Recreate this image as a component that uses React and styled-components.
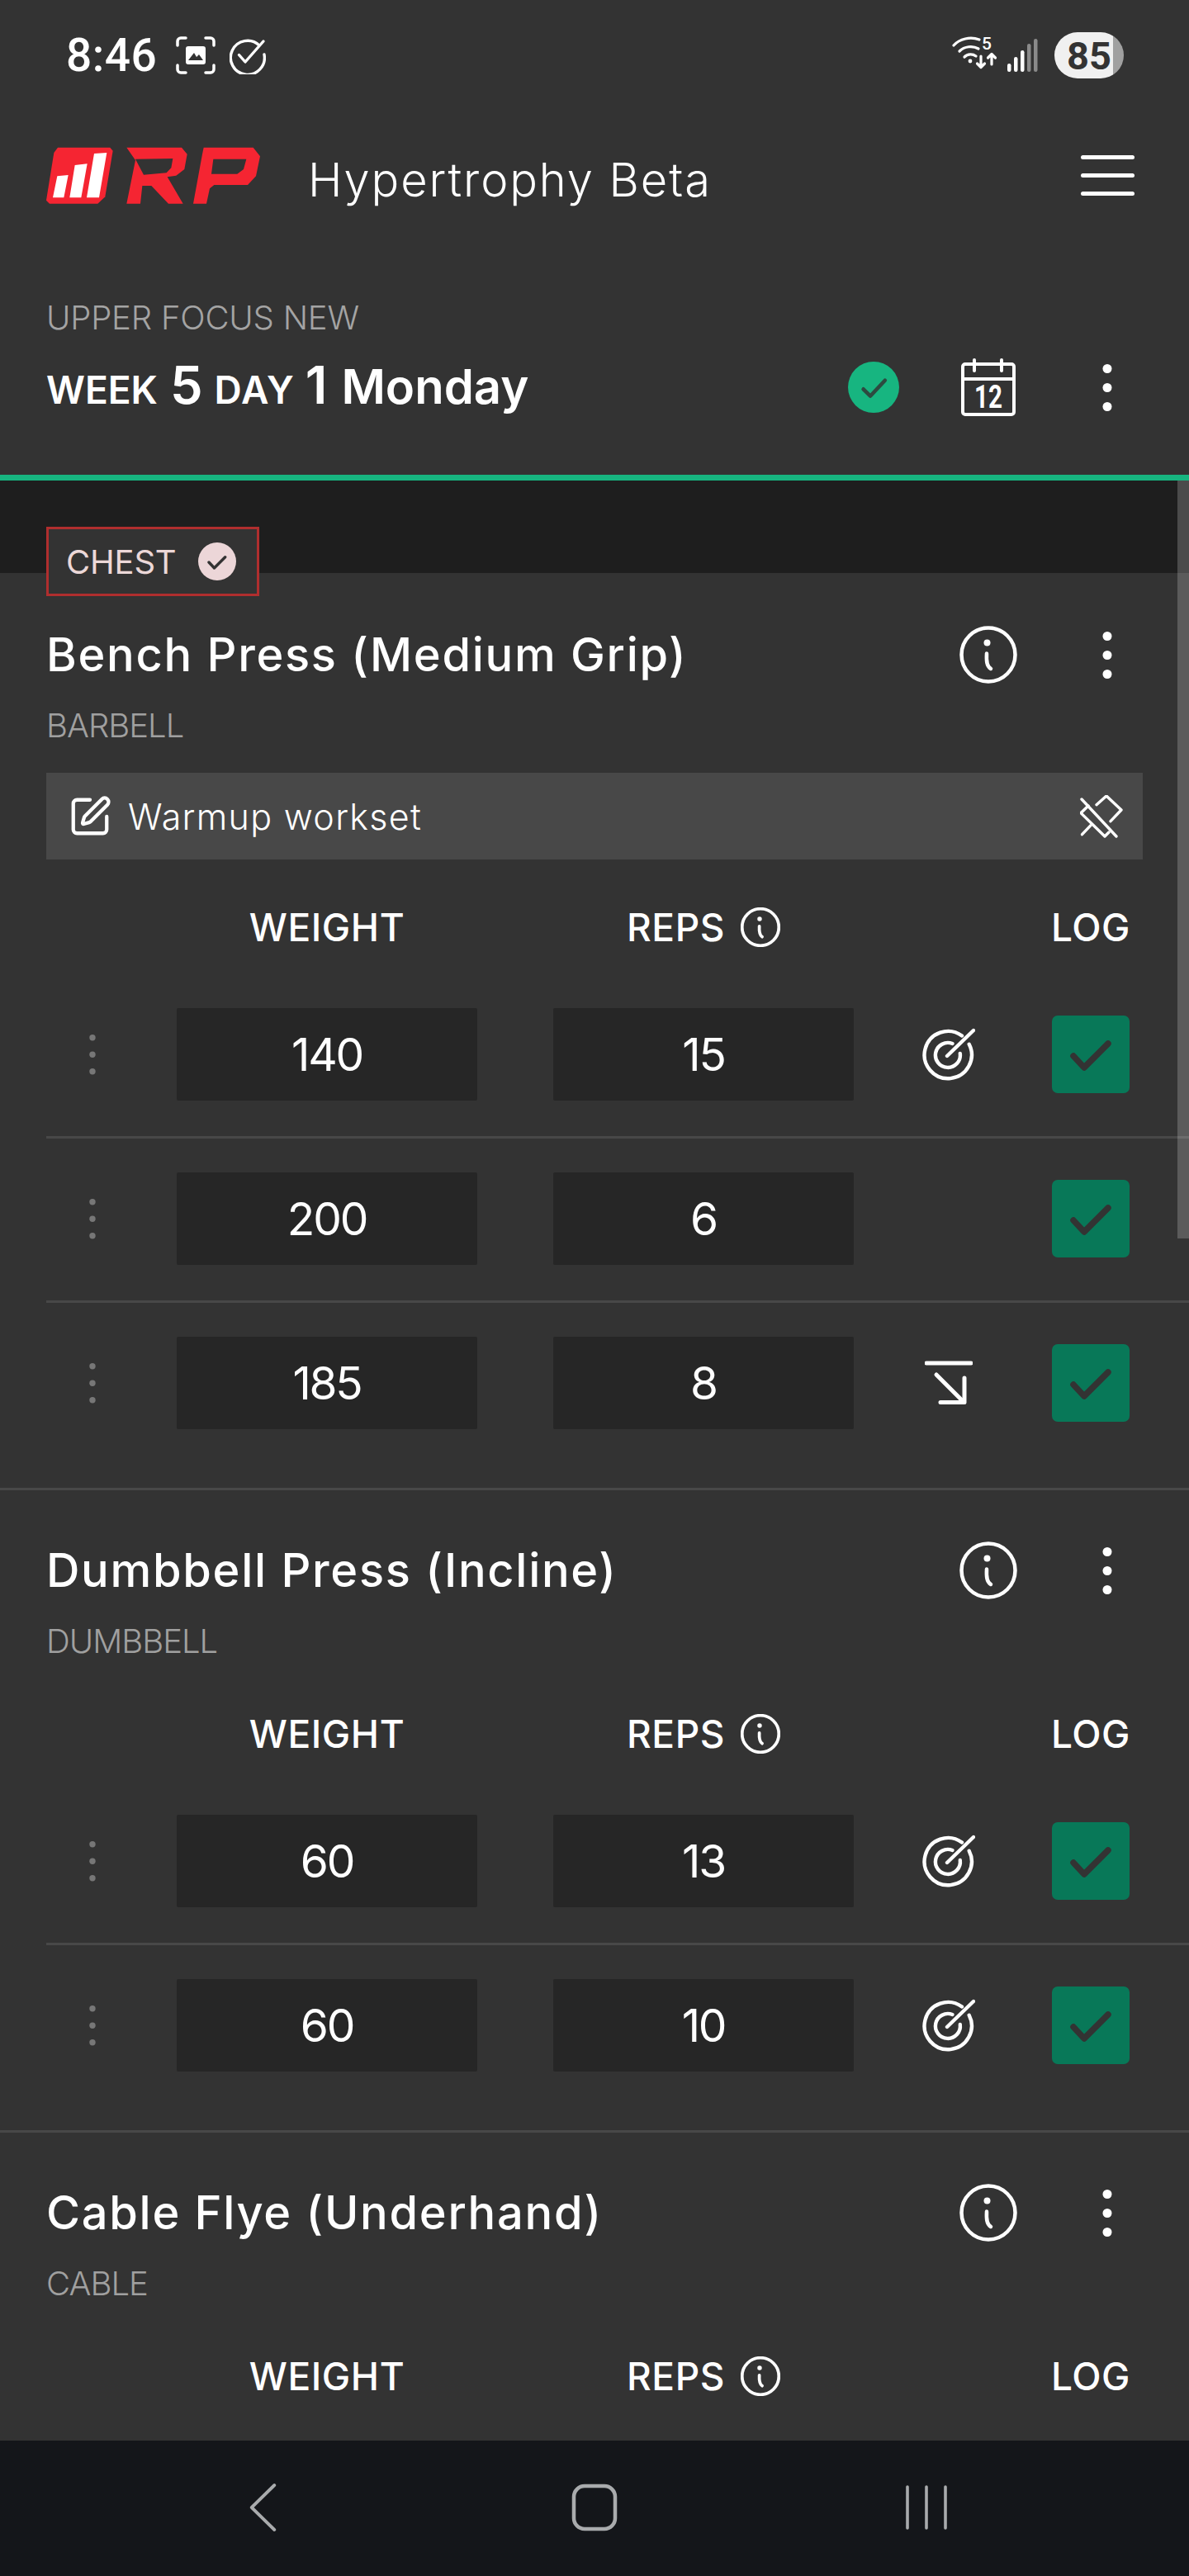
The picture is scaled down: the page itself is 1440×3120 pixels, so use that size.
import React from "react";
import styled, { createGlobalStyle } from "styled-components";
import { SquarePen } from "lucide-react";

const GlobalStyle = createGlobalStyle`
  html, body {
    margin: 0;
    padding: 0;
    background: #333333;
  }
  * {
    box-sizing: border-box;
  }
`;

const Page = styled.div`
  width: 1440px;
  height: 3120px;
  display: flex;
  flex-direction: column;
  background: #333333;
  color: #fff;
  font-family: "Inter", "Liberation Sans", sans-serif;
  overflow: hidden;
`;

const StatusBar = styled.div`
  height: 134px;
  flex-shrink: 0;
  display: flex;
  align-items: center;
  justify-content: space-between;
  padding: 0 79px 0 80px;
`;

const StatusGroup = styled.div`
  display: flex;
  align-items: center;
`;

const Clock = styled.span`
  font-family: "Roboto", sans-serif;
  font-weight: 500;
  font-size: 55px;
  letter-spacing: 0.5px;
  margin-right: 23px;
`;

const Battery = styled.div`
  width: 84px;
  height: 56px;
  margin-left: 20px;
  border-radius: 28px;
  display: flex;
  align-items: center;
  justify-content: center;
  background: linear-gradient(to right, #f0f0f0 84.5%, #a0a0a0 84.5%);
  color: #333;
  font-family: "Roboto", sans-serif;
  font-weight: 700;
  font-size: 47px;
`;

const AppHeader = styled.header`
  height: 156px;
  flex-shrink: 0;
  display: flex;
  align-items: center;
  padding: 0 66px 0 50px;
`;

const AppTitle = styled.h1`
  margin: 11px 0 0 53px;
  flex: 1;
  font-size: 56px;
  font-weight: 300;
  letter-spacing: 1.9px;
`;

const Burger = styled.div`
  width: 65px;
  display: flex;
  flex-direction: column;
  gap: 17px;
  span {
    display: block;
    height: 5px;
    border-radius: 3px;
    background: #fff;
  }
`;

const WorkoutHead = styled.section`
  height: 292px;
  flex-shrink: 0;
  padding: 75px 87px 0 56px;
  border-bottom: 7px solid #17b580;
`;

const Mesocycle = styled.div`
  height: 40px;
  line-height: 40px;
  font-size: 40px;
  font-weight: 300;
  color: #a4a4a4;
  letter-spacing: -0.2px;
`;

const WeekRow = styled.div`
  display: flex;
  align-items: center;
  height: 70px;
  margin-top: 29px;
`;

const WeekTitle = styled.div`
  flex: 1;
  font-weight: 600;
  font-size: 58px;
  line-height: 72px;
  letter-spacing: 0;
  white-space: nowrap;
`;

const SmallCaps = styled.span`
  font-size: 46px;
  letter-spacing: ${props => props.$spacing}px;
`;

const BigNum = styled.span`
  font-size: 63px;
  font-weight: 600;
  margin: 0 ${props => props.$right}px 0 ${props => props.$left}px;
`;

const Actions = styled.div`
  display: flex;
  align-items: center;
`;

const Main = styled.main`
  position: relative;
  flex: 1;
  overflow: hidden;
`;

const ScrollThumb = styled.div`
  position: absolute;
  top: 0;
  right: 0;
  width: 14px;
  height: 918px;
  background: rgba(255, 255, 255, 0.2);
`;

const GroupBand = styled.div`
  height: 112px;
  padding: 56px 0 0 56px;
  background: #1e1e1e;
`;

const GroupTag = styled.div`
  position: relative;
  width: 258px;
  height: 84px;
  display: flex;
  align-items: center;
  padding-left: 21px;
  background: #333;
  border: 3px solid #b02e2e;
  color: #ecd8d8;
  font-size: 40px;
  font-weight: 400;
  letter-spacing: -0.2px;
`;

const GroupCheck = styled.svg`
  position: absolute;
  right: 25px;
  top: 16px;
`;

const Exercise = styled.article`
  padding: 64px 0 28px 56px;
  & + & {
    border-top: 3px solid #484848;
    padding-top: 62px;
  }
`;

const ExerciseTop = styled.div`
  display: flex;
  align-items: center;
  height: 70px;
  padding-right: 87px;
`;

const ExerciseName = styled.h2`
  flex: 1;
  margin: 0;
  font-size: 56px;
  font-weight: 500;
  letter-spacing: 1.7px;
  white-space: nowrap;
`;

const Equipment = styled.div`
  height: 40px;
  line-height: 40px;
  margin-top: 31px;
  font-size: 40px;
  font-weight: 300;
  color: #a0a0a0;
  letter-spacing: -1px;
`;

const NoteBar = styled.div`
  width: 1328px;
  height: 105px;
  margin-top: 37px;
  display: flex;
  align-items: center;
  padding: 0 24px 0 26px;
  background: #484848;
  font-size: 43px;
  font-weight: 300;
  letter-spacing: 1.3px;
`;

const NoteText = styled.span`
  flex: 1;
  margin-left: 19px;
`;

const SetGrid = styled.div`
  display: grid;
  grid-template-columns: 158px 364px 456px 240px 94px;
  align-items: center;
`;

const ColumnHead = styled(SetGrid)`
  height: 60px;
  margin: 52px 0 27px;
  font-size: 46px;
  font-weight: 500;
  letter-spacing: 0.6px;
  ${Equipment} + & {
    margin-top: 62px;
  }
`;

const ColumnLabel = styled.div`
  grid-column: ${props => props.$col};
  display: flex;
  align-items: center;
  justify-content: center;
  gap: 19px;
  width: ${props => props.$wide ? "364px" : "auto"};
  justify-self: ${props => props.$wide ? "end" : "stretch"};
`;

const SetRow = styled(SetGrid)`
  padding: 41px 0 43px;
  border-bottom: 3px solid #484848;
  &:last-child {
    border-bottom: none;
  }
`;

const DragCell = styled.div`
  padding-left: 48px;
  display: flex;
`;

const ValueBox = styled.div`
  width: 364px;
  height: 112px;
  justify-self: end;
  display: flex;
  align-items: center;
  justify-content: center;
  background: #262626;
  border-radius: 2px;
  font-size: 55px;
  font-weight: 400;
  letter-spacing: -2.2px;
`;

const HintCell = styled.div`
  display: flex;
  justify-content: center;
  padding-right: 10px;
`;

const LogButton = styled.div`
  width: 94px;
  height: 94px;
  border-radius: 7px;
  background: #087858;
  display: flex;
`;

const NavBar = styled.nav`
  height: 164px;
  flex-shrink: 0;
  display: flex;
  justify-content: center;
  align-items: center;
  background: #14161a;
  padding-bottom: 3px;
`;

const NavCell = styled.div`
  width: 402px;
  display: flex;
  justify-content: center;
`;

const ScreenshotIcon = () => (
    <svg width="48" height="46" viewBox="0 0 48 46" fill="none" stroke="#fff" strokeWidth="3.5" strokeLinecap="round">
        <path d="M2 11V6a4 4 0 0 1 4-4h6M36 2h6a4 4 0 0 1 4 4v5M46 35v5a4 4 0 0 1-4 4h-6M12 44H6a4 4 0 0 1-4-4v-5" />
        <path fillRule="evenodd" fill="#fff" stroke="none" d="M15 12h18a3 3 0 0 1 3 3v16a3 3 0 0 1-3 3H15a3 3 0 0 1-3-3V15a3 3 0 0 1 3-3zm0 17h18l-5-7-3 3-3-5-7 9z" />
    </svg>
);

const TaskIcon = () => (
    <svg width="44" height="46" viewBox="0 0 44 46" fill="none" stroke="#fff" strokeWidth="3.4" strokeLinecap="round" strokeLinejoin="round" style={{ marginLeft: 17 }}>
        <path d="M36 11A20.5 20.5 0 1 0 42 22" />
        <path d="M11.5 22.5L19 31 41 6" />
    </svg>
);

const WifiIcon = () => (
    <svg width="56" height="52" viewBox="0 -6 56 52" fill="none" stroke="#fff" strokeWidth="3.2" strokeLinecap="round" strokeLinejoin="round" style={{ marginTop: -6 }}>
        <path d="M2 11C9 3 22 0 33 4" />
        <path d="M9 18C15 12 25 11 32 15" />
        <path d="M15 25C19 21 25 21 29 24" />
        <circle cx="22" cy="30" r="2.4" fill="#fff" stroke="none" />
        <text x="36" y="16" fill="#fff" stroke="none" fontFamily="Roboto, sans-serif" fontSize="21" fontWeight="500">5</text>
        <path d="M35 24v13M30.5 33l4.5 4.5 4.5-4.5" />
        <path d="M48 34V22M43.5 26l4.5-4.5 4.5 4.5" />
    </svg>
);

const SignalIcon = () => (
    <svg width="37" height="40" viewBox="0 0 37 40" style={{ marginLeft: 11 }}>
        {[[0, 30], [8, 22], [16, 14], [24, 6], [32, 0]].map(([x, y], i) => (
            <rect key={x} x={x} y={y} width="4.5" height={40 - y} rx="2.2" fill={i < 3 ? "#fff" : "#8a8a8a"} />
        ))}
    </svg>
);

const Logo = () => (
    <svg width="270" height="85" viewBox="0 0 810 255">
        <path fill="#f52532" d="M60 26H250L260 38 232 205 205 230H30L18 218 46 45Z" />
        <path fill="#fff" d="M42 208H82L98 126 58 130ZM103 208H145L167 85 122 90ZM165 208H210L238 45 192 48Z" />
        <path fill="#f52532" fillRule="evenodd" d="M310 26H510L530 50 520 105 490 128 458 133 515 230H462L400 165H367L360 230H310L342 72ZM342 68L478 66 472 100 455 118 372 125Z" />
        <path fill="#f52532" fillRule="evenodd" d="M590 26H770L795 58 780 130 750 162H628L612 175 600 230H552L585 50ZM625 68H745L735 105 712 122H618Z" />
    </svg>
);

const Kebab = ({ color = "#fff", radius = 5.5, step = 23, width = 24 }) => (
    <svg width={width} height={step * 2 + radius * 2 + 2} viewBox={`0 0 ${width} ${step * 2 + radius * 2 + 2}`} fill={color}>
        <circle cx={width / 2} cy={radius + 1} r={radius} />
        <circle cx={width / 2} cy={step + radius + 1} r={radius} />
        <circle cx={width / 2} cy={step * 2 + radius + 1} r={radius} />
    </svg>
);

const InfoIcon = ({ size = 70, gap = 0 }) => (
    <svg width={size} height={size} viewBox="0 0 70 70" fill="none" stroke="#fff" strokeWidth={size < 60 ? 5.5 : 4.5} strokeLinecap="round" style={{ marginRight: gap }}>
        <circle cx="35" cy="35" r="32.5" />
        <circle cx="33.5" cy="20.5" r="4" fill="#fff" stroke="none" />
        <path d="M33 33.5C32.5 42 32.8 49 38 52" />
    </svg>
);

const DoneBadge = () => (
    <svg width="62" height="62" viewBox="0 0 62 62" fill="none" style={{ marginRight: 75 }}>
        <circle cx="31" cy="31" r="31" fill="#17b580" />
        <path d="M18.6 33.3L27 41.7 44.8 22.7" stroke="#2d4a40" strokeWidth="4.6" strokeLinecap="round" strokeLinejoin="round" />
    </svg>
);

const CalendarIcon = () => (
    <svg width="66" height="70" viewBox="0 0 66 70" fill="none" stroke="#fff" strokeWidth="4" strokeLinecap="round" style={{ marginRight: 99 }}>
        <rect x="2" y="7" width="62" height="61" rx="3" />
        <path d="M2 25H64" />
        <path d="M16 2V15M49 2V15" />
        <text x="16" y="60" fill="#fff" stroke="none" fontFamily="Roboto, sans-serif" fontSize="38" fontWeight="700" textLength="34" lengthAdjust="spacingAndGlyphs">12</text>
    </svg>
);

const PinOffIcon = () => (
    <svg width="52" height="52" viewBox="0 0 52 52" fill="none" stroke="#fff" strokeWidth="3.4" strokeLinecap="round" strokeLinejoin="round">
        <path d="M2 5L44 50" />
        <path d="M20 11.7L32 1 50 18 37 31.7" />
        <path d="M10 13L1 21.7 30 50 35 45" />
        <path d="M13 36.7L2.5 47.7" />
    </svg>
);

const TargetIcon = () => (
    <svg width="64" height="64" viewBox="0 0 64 64" fill="none" stroke="#fff" strokeWidth="4.4" strokeLinecap="round">
        <path d="M56.7 19.7A28.6 28.6 0 1 1 48 9.5" />
        <path d="M45.8 31A15 15 0 1 1 36.5 19" />
        <path d="M30 34L62 3" />
    </svg>
);

const ArrowIcon = () => (
    <svg width="58" height="54" viewBox="0 0 58 54" fill="none" stroke="#fff" strokeWidth="5" strokeLinecap="round" strokeLinejoin="round">
        <path d="M2 3H56" />
        <path d="M14 17L47 50" />
        <path d="M48 21V50.5H19" />
    </svg>
);

const hints = {
    target: <TargetIcon />,
    down: <ArrowIcon />
};

const exercises = [
    {
        name: "Bench Press (Medium Grip)",
        equipment: "BARBELL",
        note: "Warmup workset",
        sets: [
            { weight: 140, reps: 15, hint: "target" },
            { weight: 200, reps: 6 },
            { weight: 185, reps: 8, hint: "down" }
        ]
    },
    {
        name: "Dumbbell Press (Incline)",
        equipment: "DUMBBELL",
        sets: [
            { weight: 60, reps: 13, hint: "target" },
            { weight: 60, reps: 10, hint: "target" }
        ]
    },
    {
        name: "Cable Flye (Underhand)",
        equipment: "CABLE",
        sets: []
    }
];

export default function App() {
    return (
        <Page>
            <GlobalStyle />
            <StatusBar>
                <StatusGroup>
                    <Clock>8:46</Clock>
                    <ScreenshotIcon />
                    <TaskIcon />
                </StatusGroup>
                <StatusGroup>
                    <WifiIcon />
                    <SignalIcon />
                    <Battery>85</Battery>
                </StatusGroup>
            </StatusBar>
            <AppHeader>
                <Logo />
                <AppTitle>Hypertrophy Beta</AppTitle>
                <Burger><span /><span /><span /></Burger>
            </AppHeader>
            <WorkoutHead>
                <Mesocycle>UPPER FOCUS NEW</Mesocycle>
                <WeekRow>
                    <WeekTitle>
                        <SmallCaps $spacing={0}>WEEK</SmallCaps>
                        <BigNum $left={15} $right={14}>5</BigNum>
                        <SmallCaps $spacing={1}>DAY</SmallCaps>
                        <BigNum $left={13} $right={17}>1</BigNum>
                        Monday
                    </WeekTitle>
                    <Actions>
                        <DoneBadge />
                        <CalendarIcon />
                        <Kebab />
                    </Actions>
                </WeekRow>
            </WorkoutHead>
            <Main>
                <GroupBand>
                    <GroupTag>
                        CHEST
                        <GroupCheck width="46" height="46" viewBox="0 0 46 46" fill="none">
                            <circle cx="23" cy="23" r="23" fill="#ecd6d8" />
                            <path d="M13 24L19.5 31 32.7 17.7" stroke="#333" strokeWidth="3.4" strokeLinecap="round" strokeLinejoin="round" />
                        </GroupCheck>
                    </GroupTag>
                </GroupBand>
                {exercises.map(exercise => (
                    <Exercise key={exercise.name}>
                        <ExerciseTop>
                            <ExerciseName>{exercise.name}</ExerciseName>
                            <InfoIcon gap={97} />
                            <Kebab />
                        </ExerciseTop>
                        <Equipment>{exercise.equipment}</Equipment>
                        {exercise.note && (
                            <NoteBar>
                                <SquarePen size={54} strokeWidth={1.9} color="#fff" />
                                <NoteText>{exercise.note}</NoteText>
                                <PinOffIcon />
                            </NoteBar>
                        )}
                        <ColumnHead>
                            <ColumnLabel $col={2}>WEIGHT</ColumnLabel>
                            <ColumnLabel $col={3} $wide>REPS<InfoIcon size={48} /></ColumnLabel>
                            <ColumnLabel $col={5}>LOG</ColumnLabel>
                        </ColumnHead>
                        <div>
                            {exercise.sets.map((set, index) => (
                                <SetRow key={index}>
                                    <DragCell><Kebab color="#777" radius={3.7} step={20.5} width={16} /></DragCell>
                                    <ValueBox>{set.weight}</ValueBox>
                                    <ValueBox>{set.reps}</ValueBox>
                                    <HintCell>{hints[set.hint]}</HintCell>
                                    <LogButton>
                                        <svg width="94" height="94" viewBox="0 0 94 94" fill="none">
                                            <path d="M26 49L39 63 68 34" stroke="#333" strokeWidth="7.5" strokeLinecap="round" strokeLinejoin="round" />
                                        </svg>
                                    </LogButton>
                                </SetRow>
                            ))}
                        </div>
                    </Exercise>
                ))}
                <ScrollThumb />
            </Main>
            <NavBar>
                <NavCell>
                    <svg width="40" height="60" viewBox="0 0 40 60" fill="none" stroke="#a9abad" strokeWidth="4" strokeLinecap="round" strokeLinejoin="round">
                        <path d="M34 3L5 30 34 57" transform="matrix(.95 0 0 1 2 0)" />
                    </svg>
                </NavCell>
                <NavCell>
                    <svg width="56" height="58" viewBox="0 0 56 58" fill="none" stroke="#a9abad" strokeWidth="4.5">
                        <rect x="3" y="3" width="50" height="52" rx="13" />
                    </svg>
                </NavCell>
                <NavCell>
                    <svg width="52" height="54" viewBox="0 0 52 54" fill="none" stroke="#a9abad" strokeWidth="3.6" strokeLinecap="round">
                        <path d="M3 2V52M26 2V52M49 2V52" />
                    </svg>
                </NavCell>
            </NavBar>
        </Page>
    );
}
